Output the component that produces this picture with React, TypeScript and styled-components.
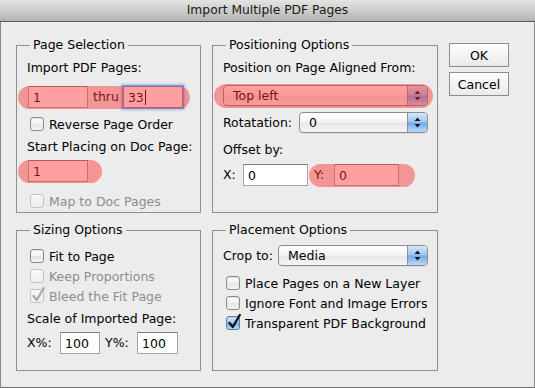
import React from 'react';
import styled, { createGlobalStyle, css } from 'styled-components';

const GlobalStyle = createGlobalStyle`
  html, body {
    margin: 0;
    padding: 0;
    background: #ececec;
  }
  body {
    font-family: "DejaVu Sans", "Liberation Sans", sans-serif;
    font-size: 12.5px;
    color: #000;
  }
`;

const Window = styled.div`
  width: 535px;
  height: 388px;
  display: flex;
  flex-direction: column;
  background: #ececec;
`;

const TitleBar = styled.div`
  height: 22px;
  box-sizing: border-box;
  border-bottom: 1px solid #5a5a5a;
  background: linear-gradient(#e4e4e4, #c8c8c8 60%, #b2b2b2);
  text-align: center;
  line-height: 21px;
  font-size: 12.3px;
  color: #24180e;
`;

const Body = styled.div`
  flex: 1;
  display: flex;
  gap: 11px;
  padding: 15px 0 0 15px;
  border: 1px solid #8a8a8a;
  border-top: none;
  border-bottom-color: #6e6e6e;
`;

const Groups = styled.div`
  display: grid;
  grid-template-columns: 185px 226px;
  column-gap: 11px;
  row-gap: 9px;
  align-content: start;
`;

const GroupBox = styled.section<{ $h: number }>`
  margin-top: 8px;
  height: ${(p) => p.$h}px;
  box-sizing: border-box;
  border: 1px solid #8f8f8f;
  padding: 0 9px 0 10px;
  display: flex;
  flex-direction: column;
`;

const Legend = styled.span`
  align-self: flex-start;
  margin: -9px 0 0 3px;
  padding: 0 3px;
  line-height: 16px;
  background: #ececec;
  white-space: nowrap;
`;

const Label = styled.div<{ $mt?: number }>`
  margin-top: ${(p) => p.$mt ?? 0}px;
  line-height: 18px;
  white-space: nowrap;
`;

const Row = styled.div<{ $mt?: number; $h?: number }>`
  display: flex;
  align-items: center;
  margin-top: ${(p) => p.$mt ?? 0}px;
  height: ${(p) => (p.$h ? `${p.$h}px` : 'auto')};
  white-space: nowrap;
`;

const InlineLabel = styled.span<{ $w?: number; $ml?: number; $mr?: number }>`
  display: inline-block;
  width: ${(p) => (p.$w ? `${p.$w}px` : 'auto')};
  margin-left: ${(p) => p.$ml ?? 0}px;
  margin-right: ${(p) => p.$mr ?? 0}px;
  line-height: 18px;
`;

const Highlight = styled.div<{ $l: number; $r: number; $t?: number; $b?: number; $mt?: number; $ml?: number }>`
  position: relative;
  display: flex;
  align-items: center;
  width: fit-content;
  margin-top: ${(p) => p.$mt ?? 0}px;
  margin-left: ${(p) => p.$ml ?? 0}px;
  &::after {
    content: '';
    position: absolute;
    top: -${(p) => p.$t ?? 0}px;
    bottom: -${(p) => p.$b ?? 1}px;
    left: -${(p) => p.$l}px;
    right: -${(p) => p.$r}px;
    border-radius: 12px;
    background: rgba(255, 45, 45, 0.45);
    pointer-events: none;
  }
`;

const Field = styled.div<{ $w: number; $ml?: number; $focused?: boolean }>`
  width: ${(p) => p.$w}px;
  height: 22px;
  box-sizing: border-box;
  margin-left: ${(p) => p.$ml ?? 0}px;
  display: flex;
  align-items: center;
  padding: 0 4px;
  background: #fff;
  border: 1px solid #a3a3a3;
  border-top-color: #7d7d7d;
  ${(p) =>
    p.$focused &&
    css`
      border-color: #5f8fd0;
      box-shadow: 0 0 0 1px #7aa5df, 0 0 2px 2px rgba(110, 160, 225, 0.6);
    `}
`;

const Caret = styled.span`
  display: inline-block;
  width: 1px;
  height: 15px;
  margin-left: 1px;
  background: #000;
`;

const PopupFrame = styled.div<{ $w: number; $ml?: number }>`
  width: ${(p) => p.$w}px;
  height: 21px;
  box-sizing: border-box;
  margin-left: ${(p) => p.$ml ?? 0}px;
  display: flex;
  border: 1px solid #8c8c8c;
  border-radius: 4px;
  overflow: hidden;
  background: linear-gradient(#ffffff, #f4f4f4 48%, #e7e7e7 52%, #f6f6f6);
  box-shadow: 0 1px 0 rgba(0, 0, 0, 0.06);
`;

const PopupValue = styled.span`
  flex: 1;
  padding-left: 9px;
  line-height: 19px;
`;

const PopupCap = styled.span`
  width: 19px;
  display: flex;
  align-items: center;
  justify-content: center;
  border-left: 1px solid #7f93ad;
  background: linear-gradient(#d3e6fb, #9cc5f2 48%, #6fa8ea 52%, #b9d9fc);
`;

const CheckRow = styled.div<{ $mt?: number; $disabled?: boolean }>`
  display: flex;
  align-items: center;
  height: 18px;
  margin-top: ${(p) => p.$mt ?? 0}px;
  color: ${(p) => (p.$disabled ? '#8d8d8d' : '#000')};
  white-space: nowrap;
`;

const Box = styled.span<{ $checked?: boolean; $disabled?: boolean }>`
  position: relative;
  width: 14px;
  height: 14px;
  box-sizing: border-box;
  margin: 0 5px 0 3px;
  border-radius: 3px;
  border: 1px solid #8b8b8b;
  background: linear-gradient(#ffffff, #f1f1f1 50%, #e4e4e4 55%, #f7f7f7);
  box-shadow: inset 0 1px 1px rgba(0, 0, 0, 0.12);
  ${(p) =>
    p.$checked &&
    !p.$disabled &&
    css`
      border-color: #5b7ea8;
      background: linear-gradient(#d6e8fb, #9fc7f2 48%, #72aaea 52%, #bcdcfc);
    `}
  ${(p) =>
    p.$disabled &&
    css`
      border-color: #c3c3c3;
      background: linear-gradient(#f8f8f8, #eeeeee);
      box-shadow: none;
    `}
`;

const CheckMark = styled.svg<{ $disabled?: boolean }>`
  position: absolute;
  left: 0;
  top: -4px;
  color: ${(p) => (p.$disabled ? '#a9a9a9' : '#111')};
`;

const ButtonColumn = styled.div`
  display: flex;
  flex-direction: column;
  gap: 5px;
  padding-top: 6px;
`;

const PushButton = styled.button`
  width: 60px;
  height: 24px;
  box-sizing: border-box;
  padding: 0;
  border: 1px solid #8d8d8d;
  border-radius: 0;
  background: linear-gradient(#fefefe, #f3f3f3 50%, #ebebeb);
  font-family: inherit;
  font-size: 12.5px;
  color: #000;
`;

const Arrows = () => (
  <svg width="7" height="11" viewBox="0 0 7 11">
    <path d="M3.5 0.5 L6.5 4 L0.5 4 Z" fill="#151515" />
    <path d="M0.5 7 L6.5 7 L3.5 10.5 Z" fill="#151515" />
  </svg>
);

const Popup = ({ value, w, ml }: { value: string; w: number; ml?: number }) => (
  <PopupFrame $w={w} $ml={ml}>
    <PopupValue>{value}</PopupValue>
    <PopupCap>
      <Arrows />
    </PopupCap>
  </PopupFrame>
);

const Check = ({
  label,
  checked,
  disabled,
  mt,
}: {
  label: string;
  checked?: boolean;
  disabled?: boolean;
  mt?: number;
}) => (
  <CheckRow $mt={mt} $disabled={disabled}>
    <Box $checked={checked} $disabled={disabled}>
      {checked && (
        <CheckMark $disabled={disabled} width="15" height="16" viewBox="0 0 15 16">
          <path
            d="M2.5 10 L5.8 14 L12.8 2"
            fill="none"
            stroke="currentColor"
            strokeWidth="2.3"
            strokeLinecap="round"
            strokeLinejoin="round"
          />
        </CheckMark>
      )}
    </Box>
    {label}
  </CheckRow>
);

export default function App() {
  return (
    <Window>
      <GlobalStyle />
      <TitleBar>Import Multiple PDF Pages</TitleBar>
      <Body>
        <Groups>
          <GroupBox $h={168}>
            <Legend>Page Selection</Legend>
            <Label $mt={6}>Import PDF Pages:</Label>
            <Highlight $l={10} $r={7} $mt={9} $ml={1}>
              <Field $w={60}>1</Field>
              <InlineLabel $ml={5} $mr={4}>
                thru
              </InlineLabel>
              <Field $w={60} $focused>
                33
                <Caret />
              </Field>
            </Highlight>
            <Check mt={7} label="Reverse Page Order" />
            <Label $mt={5}>Start Placing on Doc Page:</Label>
            <Highlight $l={10} $r={14} $mt={4} $ml={1}>
              <Field $w={60}>1</Field>
            </Highlight>
            <Check mt={10} disabled label="Map to Doc Pages" />
          </GroupBox>

          <GroupBox $h={168}>
            <Legend>Positioning Options</Legend>
            <Label $mt={6}>Position on Page Aligned From:</Label>
            <Highlight $l={9} $r={5} $t={1} $b={2} $mt={8}>
              <Popup value="Top left" w={205} />
            </Highlight>
            <Row $mt={6} $h={21}>
              <InlineLabel $w={76}>Rotatation:</InlineLabel>
              <Popup value="0" w={129} />
            </Row>
            <Label $mt={8}>Offset by:</Label>
            <Row $mt={5}>
              <InlineLabel $w={20}>X:</InlineLabel>
              <Field $w={65}>0</Field>
              <Highlight $l={5} $r={16} $ml={6}>
                <InlineLabel $w={20}>Y:</InlineLabel>
                <Field $w={65}>0</Field>
              </Highlight>
            </Row>
          </GroupBox>

          <GroupBox $h={141}>
            <Legend>Sizing Options</Legend>
            <Check mt={9} label="Fit to Page" />
            <Check mt={2} disabled label="Keep Proportions" />
            <Check mt={2} disabled checked label="Bleed the Fit Page" />
            <Label $mt={5}>Scale of Imported Page:</Label>
            <Row $mt={4}>
              <InlineLabel $w={33}>X%:</InlineLabel>
              <Field $w={40}>100</Field>
              <InlineLabel $w={32} $ml={5}>
                Y%:
              </InlineLabel>
              <Field $w={41}>100</Field>
            </Row>
          </GroupBox>

          <GroupBox $h={141}>
            <Legend>Placement Options</Legend>
            <Row $mt={7} $h={21}>
              <InlineLabel $w={55}>Crop to:</InlineLabel>
              <Popup value="Media" w={150} />
            </Row>
            <Check mt={8} label="Place Pages on a New Layer" />
            <Check mt={2} label="Ignore Font and Image Errors" />
            <Check mt={2} checked label="Transparent PDF Background" />
          </GroupBox>
        </Groups>

        <ButtonColumn>
          <PushButton>OK</PushButton>
          <PushButton>Cancel</PushButton>
        </ButtonColumn>
      </Body>
    </Window>
  );
}
